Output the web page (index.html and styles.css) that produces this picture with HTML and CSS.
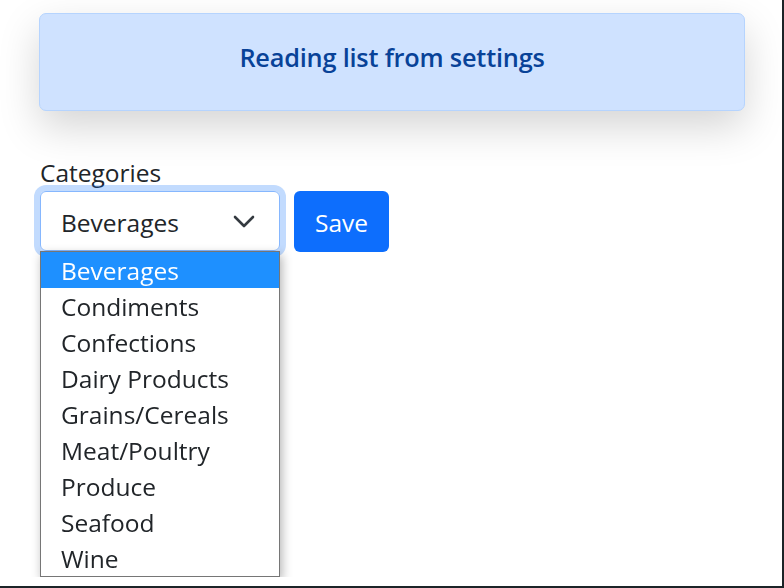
FILE: index.html
```html
<!DOCTYPE html>
<html>
  <head>
    <meta http-equiv="Content-Type" content="text/html; charset=utf-8" />
    <title>Reading list from settings</title>
    <link rel="stylesheet" href="styles.css">
  </head>
  <body>
    <div class="page">
      <div class="alert">
        <h4 class="alert-title">Reading list from settings</h4>
      </div>
      <form class="settings">
        <label class="form-label">Categories</label>
        <div class="form-row">
          <div class="select-wrap">
            <div class="form-select">
              <span class="select-value">Beverages</span>
              <svg class="chevron" width="22" height="14" viewBox="0 0 22 14">
                <path d="M2 2 L11 11 L20 2" fill="none" stroke="#343a40" stroke-width="2.6" stroke-linecap="round" stroke-linejoin="round" />
              </svg>
            </div>
            <div class="select-list">
              <div class="option selected">Beverages</div>
              <div class="option">Condiments</div>
              <div class="option">Confections</div>
              <div class="option">Dairy Products</div>
              <div class="option">Grains/Cereals</div>
              <div class="option">Meat/Poultry</div>
              <div class="option">Produce</div>
              <div class="option">Seafood</div>
              <div class="option">Wine</div>
            </div>
          </div>
          <button type="button" class="btn-primary">Save</button>
        </div>
      </form>
    </div>
  </body>
</html>
```

FILE: styles.css
```css
* {
  box-sizing: border-box;
  font-family: 'Open Sans', 'Noto Sans', sans-serif;
}
html,
body {
  margin: 0;
  padding: 0;
  background: #fff;
  color: #212529;
}
body::after {
  content: '';
  position: fixed;
  top: 0;
  left: 0;
  right: 0;
  bottom: 0;
  border-right: 2px solid #1c2428;
  border-bottom: 2px solid #1c2428;
  pointer-events: none;
}
.page {
  padding: 13px 39px 0 39px;
  width: 784px;
}
.alert {
  height: 98px;
  background: #cfe2ff;
  border: 1px solid #b6d4fe;
  border-radius: 7px;
  box-shadow: 0 16px 40px rgba(0, 0, 0, 0.17);
  display: flex;
  align-items: center;
  justify-content: center;
  padding-bottom: 10px;
}
.alert-title {
  margin: 0;
  color: #084298;
  font-size: 25.3px;
  font-weight: 600;
  letter-spacing: -0.2px;
}
.settings {
  margin-top: 47px;
}
.form-label {
  display: block;
  font-size: 24.5px;
  line-height: 30px;
  margin-left: 1px;
  margin-bottom: 3px;
}
.form-row {
  display: flex;
  gap: 14px;
  align-items: flex-start;
}
.select-wrap {
  display: flex;
  flex-direction: column;
  margin-left: 1px;
}
.form-select {
  width: 240px;
  height: 60px;
  border: 1px solid #86b7fe;
  border-radius: 6px;
  box-shadow: 0 0 0 6px rgba(13, 110, 253, 0.25);
  display: flex;
  align-items: center;
  justify-content: space-between;
  padding: 2px 24px 0 20px;
  font-size: 24.5px;
}
.chevron {
  margin-top: -1px;
}
.select-list {
  position: relative;
  z-index: 2;
  width: 240px;
  background: #fff;
  border: 1px solid #767676;
  box-shadow: 2px 4px 10px rgba(0, 0, 0, 0.3);
}
.option {
  height: 36px;
  line-height: 34px;
  padding: 2px 0 0 20px;
  font-size: 24.5px;
  color: #212529;
}
.option.selected {
  background: #1e90ff;
  color: #fff;
}
.btn-primary {
  width: 95px;
  height: 61px;
  border: 0;
  border-radius: 6px;
  background: #0d6efd;
  color: #fff;
  font-size: 24.5px;
  padding: 2px 0 0 0;
}
```
